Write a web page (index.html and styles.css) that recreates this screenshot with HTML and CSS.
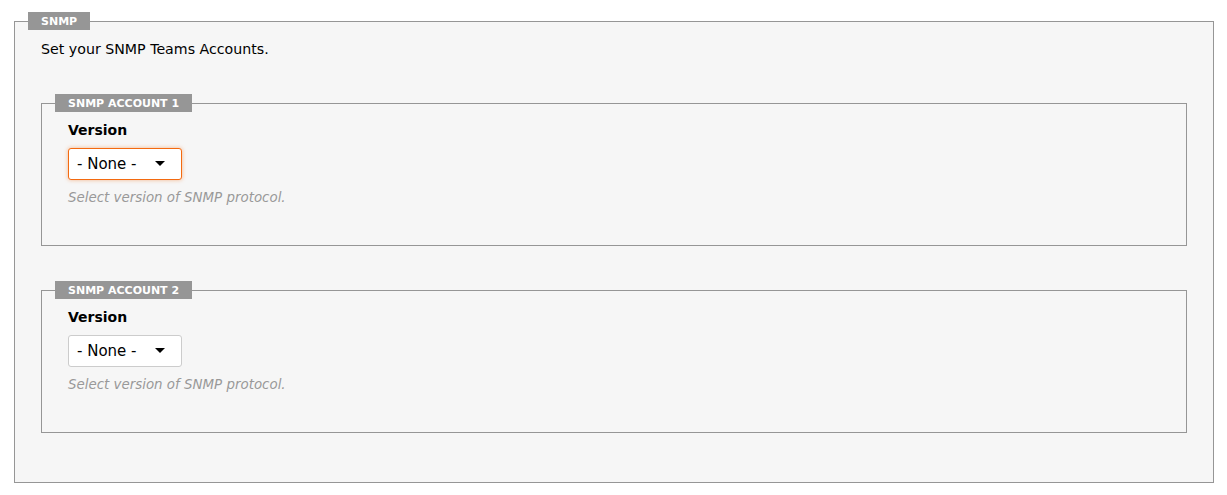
FILE: index.html
```html
<!DOCTYPE html>
<html>
<head>
<meta charset="utf-8">
<link rel="stylesheet" href="styles.css">
</head>
<body>
<fieldset class="group">
  <legend class="group-legend">SNMP</legend>
  <div class="group-body">
    <p class="intro">Set your SNMP Teams Accounts.</p>

    <fieldset class="group sub">
      <legend class="group-legend">SNMP ACCOUNT 1</legend>
      <div class="group-body">
        <label class="field-label">Version</label>
        <div class="select-wrap is-focused">
          <select class="select">
            <option>- None -</option>
            <option>v1</option>
            <option>v2c</option>
            <option>v3</option>
          </select>
        </div>
        <p class="help">Select version of SNMP protocol.</p>
      </div>
    </fieldset>

    <fieldset class="group sub">
      <legend class="group-legend">SNMP ACCOUNT 2</legend>
      <div class="group-body">
        <label class="field-label">Version</label>
        <div class="select-wrap">
          <select class="select">
            <option>- None -</option>
            <option>v1</option>
            <option>v2c</option>
            <option>v3</option>
          </select>
        </div>
        <p class="help">Select version of SNMP protocol.</p>
      </div>
    </fieldset>
  </div>
</fieldset>
</body>
</html>
```

FILE: styles.css
```css
html, body {
  margin: 0;
  padding: 0;
  background: #ffffff;
}

body {
  font-family: "DejaVu Sans", Verdana, sans-serif;
  font-size: 13px;
  color: #000;
}

.group {
  margin: 12px 13px 12px 14px;
  padding: 0 0 0 13px;
  border: 1px solid #969696;
  background: #f6f6f6;
  min-width: 0;
}

.group-legend {
  background: #969696;
  color: #fff;
  font-weight: bold;
  font-size: 11px;
  line-height: 13px;
  padding: 3px 13px 2px;
  margin: 0;
}

.group-body {
  padding: 10px 26px 49px 13px;
}

.intro {
  margin: 0;
  font-size: 14.2px;
  line-height: 18px;
}

.sub {
  margin: 36px 0 0 0;
  background: transparent;
}

.sub + .sub {
  margin-top: 35px;
}

.sub .group-body {
  padding: 8px 13px 39px 13px;
}

.field-label {
  display: block;
  font-weight: bold;
  font-size: 14px;
  line-height: 20px;
  margin: 0 0 8px;
}

.select-wrap {
  position: relative;
  width: 114px;
  height: 32px;
}

.select {
  appearance: none;
  -webkit-appearance: none;
  width: 114px;
  height: 32px;
  box-sizing: border-box;
  margin: 0;
  padding: 0 0 0 8px;
  border: 1px solid #cccccc;
  border-radius: 3px;
  background: #ffffff;
  font-family: "DejaVu Sans", Verdana, sans-serif;
  font-size: 15px;
  color: #000;
  outline: none;
}

.select-wrap::after {
  content: "";
  position: absolute;
  left: 87px;
  top: 13px;
  width: 0;
  height: 0;
  border-left: 5px solid transparent;
  border-right: 5px solid transparent;
  border-top: 5px solid #000;
  pointer-events: none;
}

.select-wrap.is-focused .select {
  border-color: #f36a10;
  box-shadow: 0 0 4px rgba(243, 106, 16, 0.45);
}

.help {
  margin: 10px 0 0;
  font-style: italic;
  color: #999999;
  font-size: 13.4px;
  line-height: 16px;
}
```
